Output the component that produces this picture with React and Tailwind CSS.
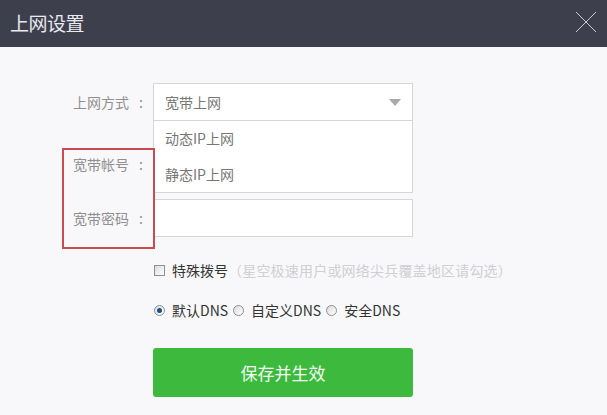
import React from "react";

const Radio = ({ checked }) => (
  <span className="w-[11px] h-[11px] rounded-full border border-[#8e8f8f] bg-gradient-to-br from-[#dcdcdc] to-white flex items-center justify-center shrink-0">
    {checked && <span className="w-[5px] h-[5px] rounded-full bg-[#1c5180]" />}
  </span>
);

const Label = ({ text }) => (
  <span className="w-[91px] pl-[11px] text-[14px] text-[#909090] flex items-center">
    <span>{text}</span>
    <span className="ml-[10px]">:</span>
  </span>
);

const App = () => {
  return (
    <div
      className="w-[607px] h-[415px] bg-[#f8f8fa] overflow-hidden"
      style={{ fontFamily: '"Microsoft YaHei", "Noto Sans CJK SC", sans-serif' }}
    >
      {/* header */}
      <div className="h-[47px] bg-[#3e3f4d] flex items-center justify-between pl-[10px] pr-[10px]">
        <span className="text-[19px] text-[#e9e9ef] tracking-[-0.5px]">上网设置</span>
        <svg width="22" height="22" viewBox="0 0 22 22" className="mb-[3px]">
          <path d="M1 1 L21 21 M21 1 L1 21" stroke="#c9cad2" strokeWidth="1" fill="none" />
        </svg>
      </div>

      {/* form */}
      <div className="relative pt-[36px] pl-[62px]">
        {/* 上网方式 */}
        <div className="flex items-center h-[38px]">
          <Label text="上网方式" />
          <div className="relative w-[260px] h-[38px] border border-[#d6d6d6] bg-white flex items-center justify-between pl-[11px] pr-[11px]">
            <span className="text-[14px] text-[#777]">宽带上网</span>
            <span className="w-0 h-0 border-l-[6px] border-r-[6px] border-t-[7px] border-l-transparent border-r-transparent border-t-[#a9a9a9]" />
            {/* open list */}
            <div className="absolute left-[-1px] top-[37px] w-[260px] h-[72px] bg-white border-x border-b border-[#d6d6d6] z-10 flex flex-col">
              <div className="h-[36px] flex items-center pl-[11px] text-[14px] text-[#777]">动态IP上网</div>
              <div className="h-[36px] flex items-center pl-[11px] text-[14px] text-[#777]">静态IP上网</div>
            </div>
          </div>
        </div>

        {/* 宽带帐号 */}
        <div className="flex items-center h-[38px] mt-[24px]">
          <Label text="宽带帐号" />
          <div className="w-[260px] h-[38px] border border-[#d6d6d6] bg-white" />
        </div>

        {/* 宽带密码 */}
        <div className="flex items-center h-[38px] mt-[16px]">
          <Label text="宽带密码" />
          <div className="w-[260px] h-[38px] border border-[#d6d6d6] bg-white" />
        </div>

        {/* annotation */}
        <div className="absolute left-[62px] top-[101px] w-[93px] h-[101px] border-2 border-[#c94a50] z-20 pointer-events-none" />

        {/* 特殊拨号 */}
        <div className="flex items-center mt-[23px] pl-[92px] h-[20px] text-[14px]">
          <span className="w-[11px] h-[11px] border border-[#8e8f8f] bg-gradient-to-br from-[#dcdcdc] to-white mr-[7px] shrink-0" />
          <span className="text-[#333]">特殊拨号</span>
          <span className="text-[#cfcfd4] tracking-[0.2px]">（星空极速用户或网络尖兵覆盖地区请勾选）</span>
        </div>

        {/* DNS */}
        <div className="flex items-center mt-[20px] pl-[92px] h-[20px] text-[14px] text-[#333]">
          <Radio checked />
          <span className="ml-[7px] mr-[5px]">默认DNS</span>
          <Radio />
          <span className="ml-[7px] mr-[5px]">自定义DNS</span>
          <Radio />
          <span className="ml-[7px]">安全DNS</span>
        </div>

        {/* button */}
        <div className="mt-[28px] ml-[91px] w-[260px] h-[49px] rounded-[3px] bg-[#3dba3d] flex items-center justify-center text-[17px] text-[#f2fbf2]">
          保存并生效
        </div>
      </div>
    </div>
  );
};

export default App;
